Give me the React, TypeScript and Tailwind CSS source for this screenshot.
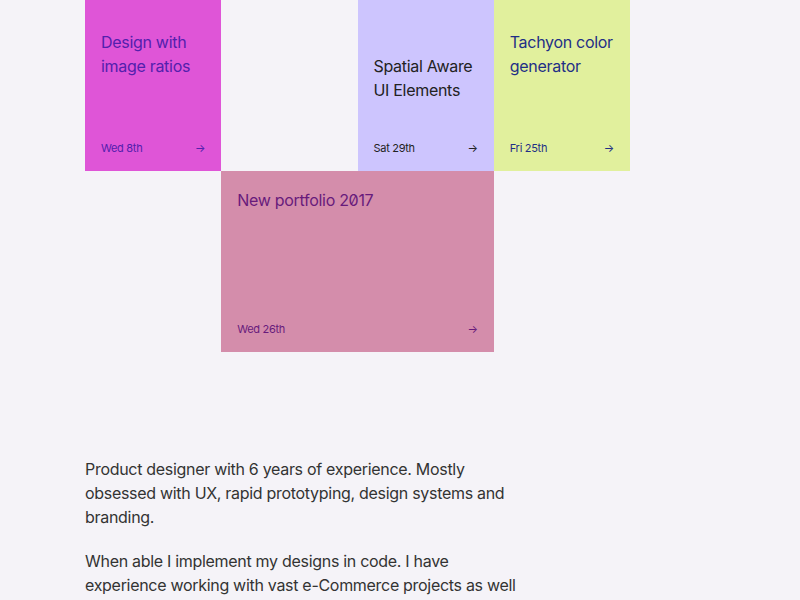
import React from 'react'

type Post = {
  title: React.ReactNode
  date: string
  bg: string
  ink: string
  pad: string
  span: string
}

const posts: Post[] = [
  {
    title: (
      <>
        Design with
        <br />
        image ratios
      </>
    ),
    date: 'Wed 8th',
    bg: 'bg-[#df55d7]',
    ink: 'text-[#5320ad]',
    pad: 'pt-[30px]',
    span: 'col-start-1 row-start-1',
  },
  {
    title: (
      <>
        Spatial Aware
        <br />
        UI Elements
      </>
    ),
    date: 'Sat 29th',
    bg: 'bg-[#cdc5fe]',
    ink: 'text-[#222222]',
    pad: 'pt-[54px]',
    span: 'col-start-3 row-start-1',
  },
  {
    title: (
      <>
        Tachyon color
        <br />
        generator
      </>
    ),
    date: 'Fri 25th',
    bg: 'bg-[#e1f09d]',
    ink: 'text-[#1f2f86]',
    pad: 'pt-[30px]',
    span: 'col-start-4 row-start-1',
  },
  {
    title: 'New portfolio 2017',
    date: 'Wed 26th',
    bg: 'bg-[#d48dab]',
    ink: 'text-[#681b7c]',
    pad: 'pt-[17px]',
    span: 'col-start-2 col-span-2 row-start-2',
  },
]

function Card({ post }: { post: Post }) {
  return (
    <a
      href="#"
      className={`${post.span} ${post.bg} ${post.ink} ${post.pad} flex flex-col justify-between px-4 pb-4`}
    >
      <h3 className="whitespace-nowrap text-[16px] leading-[24px] slashed-zero">{post.title}</h3>
      <div className="flex items-center justify-between text-[11px] leading-[14px]">
        <span>{post.date}</span>
        <span>→</span>
      </div>
    </a>
  )
}

export default function App() {
  return (
    <div className="min-h-screen bg-[#f5f3f8] font-['Inter',sans-serif] tracking-[-0.3px] text-[#333333]">
      <div className="pl-[85px]">
        {/* Post grid */}
        <section className="grid w-[545px] grid-cols-4 grid-rows-[171px_181px]">
          {posts.map((p) => (
            <Card key={p.date} post={p} />
          ))}
        </section>

        {/* About */}
        <section className="mt-[105px] w-[440px] space-y-5 text-[16px] leading-[24px]">
          <p>
            Product designer with 6 years of experience. Mostly obsessed with UX, rapid prototyping,
            design systems and branding.
          </p>
          <p>
            When able I implement my designs in code. I have experience working with vast
            e-Commerce projects as well
          </p>
        </section>
      </div>
    </div>
  )
}
